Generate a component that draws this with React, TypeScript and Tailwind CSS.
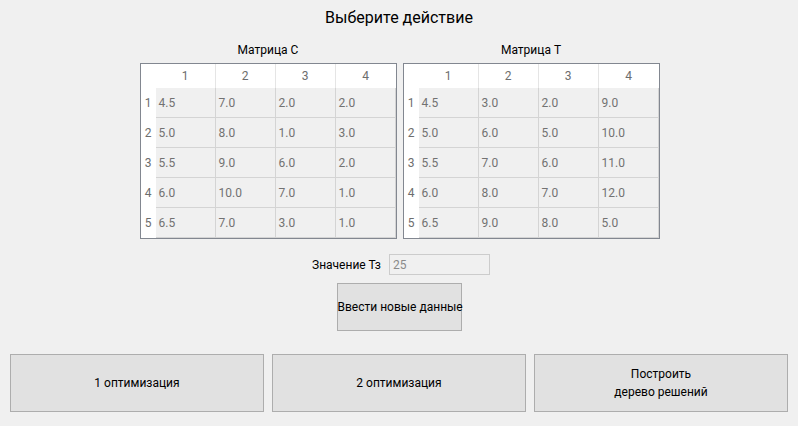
const C = [
  ['4.5', '7.0', '2.0', '2.0'],
  ['5.0', '8.0', '1.0', '3.0'],
  ['5.5', '9.0', '6.0', '2.0'],
  ['6.0', '10.0', '7.0', '1.0'],
  ['6.5', '7.0', '3.0', '1.0'],
]

const T = [
  ['4.5', '3.0', '2.0', '9.0'],
  ['5.0', '6.0', '5.0', '10.0'],
  ['5.5', '7.0', '6.0', '11.0'],
  ['6.0', '8.0', '7.0', '12.0'],
  ['6.5', '9.0', '8.0', '5.0'],
]

function Matrix({ title, data }: { title: string; data: string[][] }) {
  return (
    <div className="flex flex-col items-center">
      <div className="h-[18px] leading-[18px] text-[12px] text-black mb-[4px]">{title}</div>
      <div className="border border-[#828790] bg-white flex flex-col">
        <div className="flex h-[24px]">
          <div className="w-[15px] bg-white" />
          {[1, 2, 3, 4].map((n) => (
            <div
              key={n}
              className="w-[60px] bg-white border-r border-[#e5e5e5] last:border-r-0 flex items-center justify-center text-[12px] text-[#6d6d6d]"
            >
              {n}
            </div>
          ))}
        </div>
        {data.map((row, i) => (
          <div key={i} className="flex h-[30px]">
            <div className="w-[15px] bg-white flex items-center justify-center text-[12px] text-[#6d6d6d]">
              {i + 1}
            </div>
            {row.map((v, j) => (
              <div
                key={j}
                className="w-[60px] bg-[#f0f0f0] border-r border-b border-[#d4d4d4] flex items-center pl-[3px] text-[12px] text-[#727272]"
              >
                {v}
              </div>
            ))}
          </div>
        ))}
      </div>
    </div>
  )
}

export default function App() {
  return (
    <div
      className="w-[798px] h-[426px] bg-[#f0f0f0] flex flex-col items-center text-black"
      style={{ fontFamily: 'Roboto, "Noto Sans", sans-serif' }}
    >
      <div className="mt-[7px] h-[22px] leading-[22px] text-[16px]">Выберите действие</div>
      <div className="mt-[12px] flex gap-[6px] pl-[1px]">
        <Matrix title="Матрица C" data={C} />
        <Matrix title="Матрица T" data={T} />
      </div>
      <div className="mt-[15px] w-full flex items-center h-[21px] pl-[312px]">
        <span className="w-[77px] text-[12px] whitespace-nowrap">Значение Тз</span>
        <div className="w-[101px] h-[21px] border border-[#cccccc] bg-[#f0f0f0] flex items-center pl-[3px] text-[12px] text-[#8a8a8a]">
          25
        </div>
      </div>
      <button className="mt-[8px] w-[125px] h-[48px] border border-[#adadad] bg-[#e1e1e1] text-[12px] whitespace-nowrap">
        Ввести новые данные
      </button>
      <div className="mt-[23px] w-full px-[10px] flex gap-[8px]">
        <button className="flex-1 h-[58px] border border-[#adadad] bg-[#e1e1e1] text-[12px]">
          1 оптимизация
        </button>
        <button className="flex-1 h-[58px] border border-[#adadad] bg-[#e1e1e1] text-[12px]">
          2 оптимизация
        </button>
        <button className="flex-1 h-[58px] border border-[#adadad] bg-[#e1e1e1] text-[12px] leading-[18px]">
          Построить
          <br />
          дерево решений
        </button>
      </div>
    </div>
  )
}
